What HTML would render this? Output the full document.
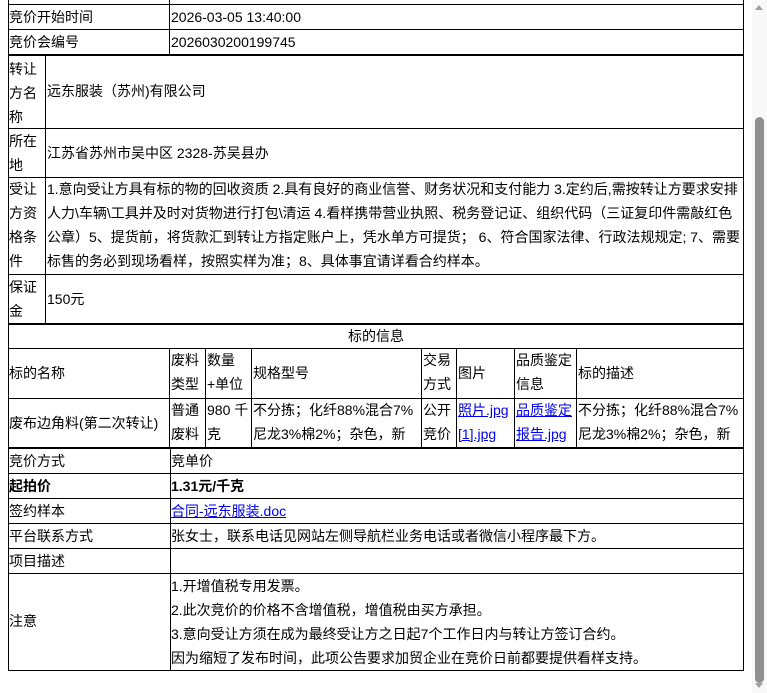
<!DOCTYPE html>
<html><head><meta charset="utf-8"><style>
body{margin:0;width:767px;height:693px;overflow:hidden;background:#fff;position:relative;font-family:"Liberation Sans","Noto Sans CJK SC",sans-serif;font-size:14px;color:#000}
.h{position:absolute;left:8px;width:736px;height:1px;background:#000}
.v{position:absolute;width:1px;background:#000}
.t{position:absolute;line-height:24px;white-space:nowrap}
a{color:#00e;text-decoration:underline}
</style></head><body>
<div class="h" style="top:4px"></div>
<div class="h" style="top:29px"></div>
<div class="h" style="top:54px;height:2px"></div>
<div class="h" style="top:128px"></div>
<div class="h" style="top:177px"></div>
<div class="h" style="top:274px"></div>
<div class="h" style="top:323px;height:2px"></div>
<div class="h" style="top:348px"></div>
<div class="h" style="top:398px"></div>
<div class="h" style="top:447px;height:2px"></div>
<div class="h" style="top:473px"></div>
<div class="h" style="top:498px"></div>
<div class="h" style="top:523px"></div>
<div class="h" style="top:548px"></div>
<div class="h" style="top:573px"></div>
<div class="h" style="top:670px"></div>
<div class="v" style="left:8px;top:0;height:671px"></div>
<div class="v" style="left:743px;top:0;height:671px"></div>
<div class="v" style="left:169px;top:0;height:55px"></div>
<div class="v" style="left:45px;top:55px;height:269px"></div>
<div class="v" style="left:169px;top:348px;height:100px"></div>
<div class="v" style="left:205px;top:348px;height:100px"></div>
<div class="v" style="left:251px;top:348px;height:100px"></div>
<div class="v" style="left:421px;top:348px;height:100px"></div>
<div class="v" style="left:456px;top:348px;height:100px"></div>
<div class="v" style="left:514px;top:348px;height:100px"></div>
<div class="v" style="left:576px;top:348px;height:100px"></div>
<div class="v" style="left:170px;top:448px;height:223px"></div>

<div class="t" style="left:9px;top:5px">竞价开始时间</div>
<div class="t" style="left:171px;top:5px">2026-03-05 13:40:00</div>
<div class="t" style="left:9px;top:30px">竞价会编号</div>
<div class="t" style="left:171px;top:30px">202603020019974­5</div>

<div class="t" style="left:9px;top:57px">转让<br>方名<br>称</div>
<div class="t" style="left:47px;top:79px">远东服装（苏州)有限公司</div>
<div class="t" style="left:9px;top:129px">所在<br>地</div>
<div class="t" style="left:47px;top:141px">江苏省苏州市吴中区 2328-苏吴县办</div>
<div class="t" style="left:9px;top:177px">受让<br>方资<br>格条<br>件</div>
<div class="t" style="left:47px;top:177px">1.意向受让方具有标的物的回收资质 2.具有良好的商业信誉、财务状况和支付能力 3.定约后,需按转让方要求安排<br>人力\车辆\工具并及时对货物进行打包\清运 4.看样携带营业执照、税务登记证、组织代码（三证复印件需敲红色<br>公章）5、提货前，将货款汇到转让方指定账户上，凭水单方可提货； 6、符合国家法律、行政法规规定; 7、需要<br>标售的务必到现场看样，按照实样为准；8、具体事宜请详看合约样本。</div>
<div class="t" style="left:9px;top:275px">保证<br>金</div>
<div class="t" style="left:47px;top:287px">150元</div>

<div class="t" style="left:8px;width:736px;text-align:center;top:324px">标的信息</div>
<div class="t" style="left:9px;top:361px">标的名称</div>
<div class="t" style="left:171px;top:348px">废料<br>类型</div>
<div class="t" style="left:207px;top:348px">数量<br>+单位</div>
<div class="t" style="left:253px;top:361px">规格型号</div>
<div class="t" style="left:423px;top:348px">交易<br>方式</div>
<div class="t" style="left:458px;top:361px">图片</div>
<div class="t" style="left:516px;top:348px">品质鉴定<br>信息</div>
<div class="t" style="left:578px;top:361px">标的描述</div>
<div class="t" style="left:9px;top:411px">废布边角料(第二次转让)</div>
<div class="t" style="left:171px;top:398px">普通<br>废料</div>
<div class="t" style="left:207px;top:398px">980 千<br>克</div>
<div class="t" style="left:253px;top:398px">不分拣；化纤88%混合7%<br>尼龙3%棉2%；杂色，新</div>
<div class="t" style="left:423px;top:398px">公开<br>竞价</div>
<div class="t" style="left:458px;top:398px"><a>照片.jpg</a><br><a>[1].jpg</a></div>
<div class="t" style="left:516px;top:398px"><a>品质鉴定</a><br><a>报告.jpg</a></div>
<div class="t" style="left:578px;top:398px">不分拣；化纤88%混合7%<br>尼龙3%棉2%；杂色，新</div>

<div class="t" style="left:9px;top:449px">竞价方式</div>
<div class="t" style="left:171px;top:449px">竞单价</div>
<div class="t" style="left:9px;top:474px;font-weight:bold">起拍价</div>
<div class="t" style="left:171px;top:474px;font-weight:bold">1.31元/千克</div>
<div class="t" style="left:9px;top:499px">签约样本</div>
<div class="t" style="left:171px;top:499px"><a>合同-远东服装.doc</a></div>
<div class="t" style="left:9px;top:524px">平台联系方式</div>
<div class="t" style="left:171px;top:524px">张女士，联系电话见网站左侧导航栏业务电话或者微信小程序最下方。</div>
<div class="t" style="left:9px;top:549px">项目描述</div>
<div class="t" style="left:9px;top:609px">注意</div>
<div class="t" style="left:171px;top:574px">1.开增值税专用发票。</div>
<div class="t" style="left:171px;top:598px">2.此次竞价的价格不含增值税，增值税由买方承担。</div>
<div class="t" style="left:171px;top:622px">3.意向受让方须在成为最终受让方之日起7个工作日内与转让方签订合约。</div>
<div class="t" style="left:171px;top:646px">因为缩短了发布时间，此项公告要求加贸企业在竞价日前都要提供看样支持。</div>

<div style="position:absolute;left:752px;top:0;width:15px;height:693px;background:#f8f8f8"></div>
<div style="position:absolute;left:755px;top:117px;width:9px;height:566px;background:#909090;border-radius:5px"></div>
<div style="position:absolute;left:755px;top:5px;width:0;height:0;border-left:4px solid transparent;border-right:4px solid transparent;border-bottom:5px solid #a0a0a0"></div>
<div style="position:absolute;left:755px;top:683px;width:0;height:0;border-left:4px solid transparent;border-right:4px solid transparent;border-top:5px solid #a0a0a0"></div>
</body></html>
